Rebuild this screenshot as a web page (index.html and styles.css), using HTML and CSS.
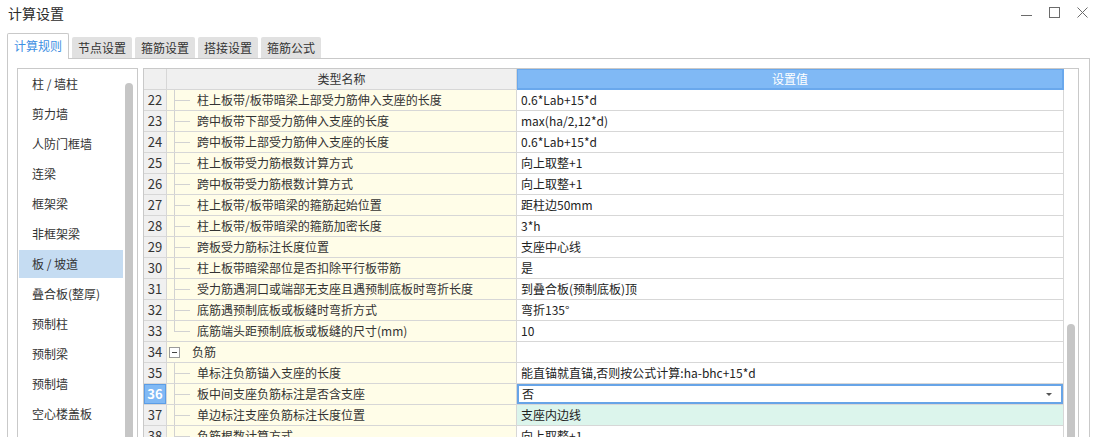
FILE: index.html
```html
<!DOCTYPE html>
<html lang="zh-CN">
<head>
<meta charset="utf-8">
<title>计算设置</title>
<link rel="stylesheet" href="styles.css">
</head>
<body>
<div class="window">
  <header class="titlebar">
    <div class="title">计算设置</div>
    <div class="controls">
      <svg viewBox="0 0 11 11"><path d="M0 8.5H11" stroke="#6b6b6b" stroke-width="1" fill="none"/></svg>
      <svg viewBox="0 0 11 11"><rect x="0.5" y="0.5" width="10" height="10" stroke="#6b6b6b" stroke-width="1" fill="none"/></svg>
      <svg viewBox="0 0 11 11"><path d="M0.5 0.5L10.5 10.5M10.5 0.5L0.5 10.5" stroke="#6b6b6b" stroke-width="1" fill="none"/></svg>
    </div>
  </header>

  <nav class="tabs">
    <div class="tab active">计算规则</div>
    <div class="tab">节点设置</div>
    <div class="tab">箍筋设置</div>
    <div class="tab">搭接设置</div>
    <div class="tab">箍筋公式</div>
  </nav>

  <section class="panel">
    <aside class="list">
      <ul class="items">
        <li>柱 / 墙柱</li>
        <li>剪力墙</li>
        <li>人防门框墙</li>
        <li>连梁</li>
        <li>框架梁</li>
        <li>非框架梁</li>
        <li class="sel">板 / 坡道</li>
        <li>叠合板(整厚)</li>
        <li>预制柱</li>
        <li>预制梁</li>
        <li>预制墙</li>
        <li>空心楼盖板</li>
      </ul>
      <div class="track"><div class="thumb"></div></div>
    </aside>

    <div class="gridwrap">
      <div class="grid">
        <div class="row head">
          <div class="c-num"></div>
          <div class="c-name">类型名称</div>
          <div class="c-val">设置值</div>
        </div>

        <div class="row"><div class="c-num">22</div><div class="c-name"><span class="branch"><i class="up"></i><i class="down"></i></span><span class="txt">柱上板带/板带暗梁上部受力筋伸入支座的长度</span></div><div class="c-val">0.6*Lab+15*d</div></div>
        <div class="row"><div class="c-num">23</div><div class="c-name"><span class="branch"><i class="up"></i><i class="down"></i></span><span class="txt">跨中板带下部受力筋伸入支座的长度</span></div><div class="c-val">max(ha/2,12*d)</div></div>
        <div class="row"><div class="c-num">24</div><div class="c-name"><span class="branch"><i class="up"></i><i class="down"></i></span><span class="txt">跨中板带上部受力筋伸入支座的长度</span></div><div class="c-val">0.6*Lab+15*d</div></div>
        <div class="row"><div class="c-num">25</div><div class="c-name"><span class="branch"><i class="up"></i><i class="down"></i></span><span class="txt">柱上板带受力筋根数计算方式</span></div><div class="c-val">向上取整+1</div></div>
        <div class="row"><div class="c-num">26</div><div class="c-name"><span class="branch"><i class="up"></i><i class="down"></i></span><span class="txt">跨中板带受力筋根数计算方式</span></div><div class="c-val">向上取整+1</div></div>
        <div class="row"><div class="c-num">27</div><div class="c-name"><span class="branch"><i class="up"></i><i class="down"></i></span><span class="txt">柱上板带/板带暗梁的箍筋起始位置</span></div><div class="c-val">距柱边50mm</div></div>
        <div class="row"><div class="c-num">28</div><div class="c-name"><span class="branch"><i class="up"></i><i class="down"></i></span><span class="txt">柱上板带/板带暗梁的箍筋加密长度</span></div><div class="c-val">3*h</div></div>
        <div class="row"><div class="c-num">29</div><div class="c-name"><span class="branch"><i class="up"></i><i class="down"></i></span><span class="txt">跨板受力筋标注长度位置</span></div><div class="c-val">支座中心线</div></div>
        <div class="row"><div class="c-num">30</div><div class="c-name"><span class="branch"><i class="up"></i><i class="down"></i></span><span class="txt">柱上板带暗梁部位是否扣除平行板带筋</span></div><div class="c-val">是</div></div>
        <div class="row"><div class="c-num">31</div><div class="c-name"><span class="branch"><i class="up"></i><i class="down"></i></span><span class="txt">受力筋遇洞口或端部无支座且遇预制底板时弯折长度</span></div><div class="c-val">到叠合板(预制底板)顶</div></div>
        <div class="row"><div class="c-num">32</div><div class="c-name"><span class="branch"><i class="up"></i><i class="down"></i></span><span class="txt">底筋遇预制底板或板缝时弯折方式</span></div><div class="c-val">弯折135°</div></div>
        <div class="row"><div class="c-num">33</div><div class="c-name"><span class="branch last"><i class="up"></i><i class="down"></i></span><span class="txt">底筋端头距预制底板或板缝的尺寸(mm)</span></div><div class="c-val">10</div></div>
        <div class="row"><div class="c-num">34</div><div class="c-name"><span class="toggle"></span><span class="txt group">负筋</span></div><div class="c-val"></div></div>
        <div class="row"><div class="c-num">35</div><div class="c-name"><span class="branch"><i class="up"></i><i class="down"></i></span><span class="txt">单标注负筋锚入支座的长度</span></div><div class="c-val">能直锚就直锚,否则按公式计算:ha-bhc+15*d</div></div>
        <div class="row current"><div class="c-num">36</div><div class="c-name"><span class="branch"><i class="up"></i><i class="down"></i></span><span class="txt">板中间支座负筋标注是否含支座</span></div><div class="c-val editor"><span>否</span><span class="caret"></span></div></div>
        <div class="row"><div class="c-num">37</div><div class="c-name"><span class="branch"><i class="up"></i><i class="down"></i></span><span class="txt">单边标注支座负筋标注长度位置</span></div><div class="c-val mint">支座内边线</div></div>
        <div class="row"><div class="c-num">38</div><div class="c-name"><span class="branch"><i class="up"></i><i class="down"></i></span><span class="txt">负筋根数计算方式</span></div><div class="c-val">向上取整+1</div></div>
      </div>
      <div class="gtrack"><div class="gthumb"></div></div>
    </div>
  </section>
</div>
</body>
</html>
```

FILE: styles.css
```css
* {
  box-sizing: border-box;
  margin: 0;
  padding: 0;
}

html,
body {
  width: 1098px;
  height: 437px;
  overflow: hidden;
  background: #fff;
}

body {
  font-family: "Noto Sans CJK SC", "Microsoft YaHei", "Noto Sans", sans-serif;
  font-size: 12px;
  color: #333;
}

/* title bar */
.titlebar {
  height: 33px;
  display: flex;
  justify-content: space-between;
  align-items: flex-start;
}

.title {
  font-size: 14px;
  line-height: 16px;
  padding: 5px 0 0 8px;
  color: #2b2b2b;
}

.controls {
  display: flex;
  gap: 17px;
  padding: 7px 10px 0 0;
}

.controls svg {
  display: block;
  width: 11px;
  height: 11px;
}

/* tabs */
.tabs {
  display: flex;
  align-items: flex-end;
  gap: 3px;
  height: 25px;
  padding-left: 7px;
}

.tab {
  height: 21px;
  line-height: 21px;
  padding: 0 6px;
  background: #e1e1e1;
  color: #333;
  border-radius: 2px 2px 0 0;
  white-space: nowrap;
}

.tab.active {
  position: relative;
  z-index: 1;
  height: 26px;
  line-height: 24px;
  margin-bottom: -1px;
  background: #fff;
  border: 1px solid #c9c9c9;
  border-bottom: none;
  color: #3d8fe3;
}

/* panel */
.panel {
  display: flex;
  gap: 5px;
  height: 379px;
  margin: 0 8px 0 7px;
  padding: 9px 10px 0 9px;
  border: 1px solid #c9c9c9;
  border-bottom: none;
  overflow: hidden;
}

/* left list */
.list {
  flex: none;
  width: 121px;
  display: flex;
  border: 1px solid #c9c9c9;
  border-bottom: none;
  overflow: hidden;
}

.items {
  list-style: none;
  width: 104px;
  margin-left: 1px;
  padding-top: 1px;
}

.items li {
  height: 28px;
  line-height: 28px;
  margin-bottom: 2px;
  padding-left: 13px;
  color: #333;
  white-space: nowrap;
}

.items li.sel {
  background: #c5dcf2;
}

.track {
  width: 8px;
  margin-left: 2px;
  padding-top: 14px;
  display: flex;
  flex-direction: column;
}

.thumb {
  flex: 1;
  width: 8px;
  background: #c6c6c6;
  border-radius: 4px 4px 0 0;
}

/* grid */
.gridwrap {
  flex: none;
  width: 936px;
  display: flex;
  border: 1px solid #c9c9c9;
  border-bottom: none;
  overflow: hidden;
}

.grid {
  width: 920px;
  flex: none;
}

.row {
  display: grid;
  grid-template-columns: 23px 350px 547px;
  height: 21px;
}

.row > div {
  border-right: 1px solid #d7d7d7;
  border-bottom: 1px solid #d7d7d7;
  line-height: 20px;
  white-space: nowrap;
  overflow: hidden;
}

.c-num {
  background: #f0f0f0;
  text-align: center;
  font-size: 13px;
  color: #333;
}

.c-name {
  background: #fffde8;
  display: flex;
  align-items: stretch;
}

.c-val {
  background: #fff;
  padding-left: 4px;
  color: #222;
}

.head .c-name {
  background: #f0f0f0;
  justify-content: center;
  color: #333;
}

.head .c-val {
  background: #80b9f5;
  box-shadow: inset 0 0 0 1px #6aa8ec;
  border-right-color: #6aa8ec;
  border-bottom-color: #6aa8ec;
  color: #fff;
  text-align: center;
  padding-left: 0;
}

/* tree lines */
.branch {
  flex: none;
  width: 16px;
  margin-left: 7px;
  margin-bottom: -1px;
  display: flex;
  flex-direction: column;
}

.branch .up {
  height: 11px;
  border-left: 1px solid #d2d2d2;
  border-bottom: 1px solid #d2d2d2;
}

.branch .down {
  flex: 1;
  border-left: 1px solid #d2d2d2;
}

.branch.last .down {
  border-left-color: transparent;
}

.txt {
  margin-left: 7px;
}

.toggle {
  flex: none;
  width: 11px;
  height: 11px;
  margin: 5px 0 0 2px;
  border: 1px solid #9a9a9a;
  background: #fff;
  display: flex;
  align-items: center;
  justify-content: center;
}

.toggle::before {
  content: "";
  width: 5px;
  height: 1px;
  background: #444;
}

.txt.group {
  margin-left: 12px;
}

/* current row */
.current .c-num {
  background: #80b9f5;
  box-shadow: inset 0 0 0 1px #5b9de6;
  color: #fff;
  font-weight: bold;
}

.editor {
  display: flex;
  justify-content: space-between;
  align-items: center;
  box-shadow: inset 0 0 0 2px #67a4e7;
  padding-left: 5px;
  padding-right: 11px;
}

.caret {
  width: 0;
  height: 0;
  border-left: 3px solid transparent;
  border-right: 3px solid transparent;
  border-top: 3px solid #555;
}

.mint {
  background: #dcf5ec;
}

/* grid scrollbar */
.gtrack {
  width: 14px;
  flex: none;
  padding: 255px 0 0 3px;
  display: flex;
  flex-direction: column;
}

.gthumb {
  flex: 1;
  width: 8px;
  background: #c6c6c6;
  border-radius: 4px 4px 0 0;
}
```
